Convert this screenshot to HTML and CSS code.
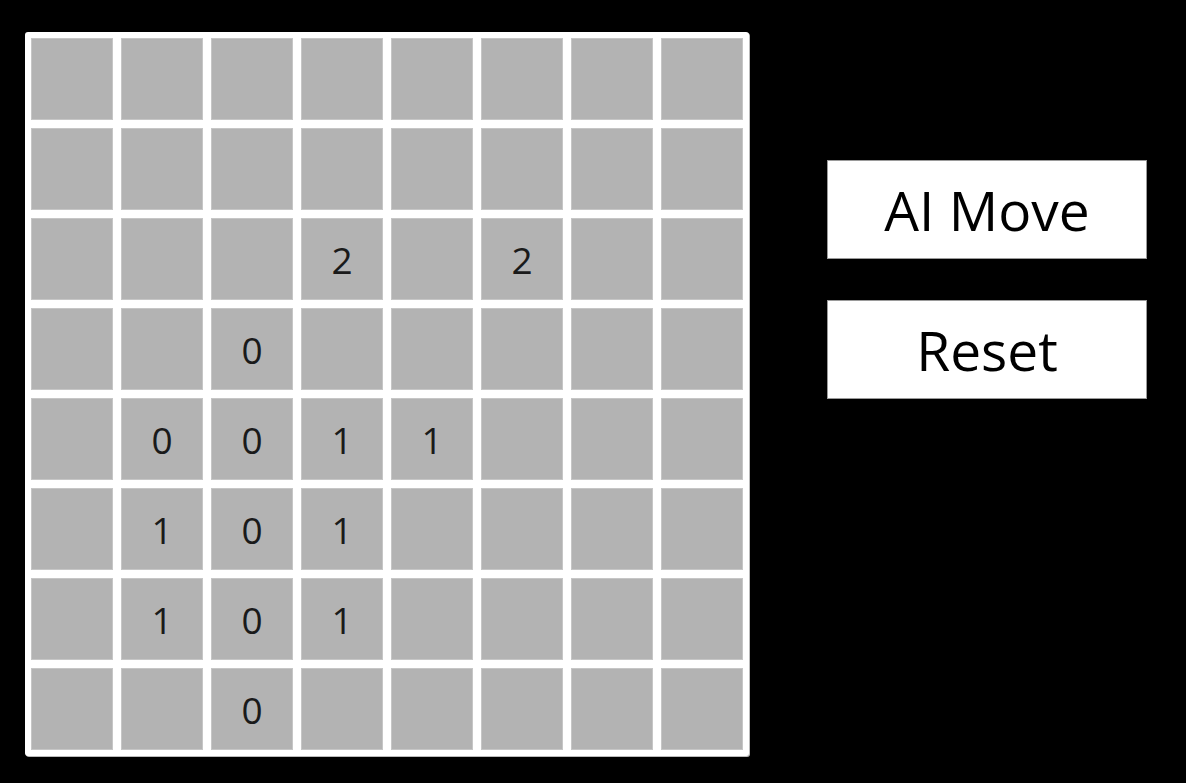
FILE: index.html
```html
<!DOCTYPE html>
<html>
<head>
<meta charset="utf-8">
<link rel="stylesheet" href="styles.css">
</head>
<body>
<div class="app">
  <div class="board">
    <div class="cell"></div><div class="cell"></div><div class="cell"></div><div class="cell"></div><div class="cell"></div><div class="cell"></div><div class="cell"></div><div class="cell"></div>
    <div class="cell"></div><div class="cell"></div><div class="cell"></div><div class="cell"></div><div class="cell"></div><div class="cell"></div><div class="cell"></div><div class="cell"></div>
    <div class="cell"></div><div class="cell"></div><div class="cell"></div><div class="cell">2</div><div class="cell"></div><div class="cell">2</div><div class="cell"></div><div class="cell"></div>
    <div class="cell"></div><div class="cell"></div><div class="cell">0</div><div class="cell"></div><div class="cell"></div><div class="cell"></div><div class="cell"></div><div class="cell"></div>
    <div class="cell"></div><div class="cell">0</div><div class="cell">0</div><div class="cell">1</div><div class="cell">1</div><div class="cell"></div><div class="cell"></div><div class="cell"></div>
    <div class="cell"></div><div class="cell">1</div><div class="cell">0</div><div class="cell">1</div><div class="cell"></div><div class="cell"></div><div class="cell"></div><div class="cell"></div>
    <div class="cell"></div><div class="cell">1</div><div class="cell">0</div><div class="cell">1</div><div class="cell"></div><div class="cell"></div><div class="cell"></div><div class="cell"></div>
    <div class="cell"></div><div class="cell"></div><div class="cell">0</div><div class="cell"></div><div class="cell"></div><div class="cell"></div><div class="cell"></div><div class="cell"></div>
  </div>
  <div class="controls">
    <button class="btn">AI Move</button>
    <button class="btn">Reset</button>
  </div>
</div>
</body>
</html>
```
FILE: styles.css
```css
html, body {
  margin: 0;
  padding: 0;
  background: #000;
  width: 1186px;
  height: 783px;
  overflow: hidden;
}
.app {
  display: flex;
  align-items: flex-start;
  padding: 32px 0 0 25px;
  font-family: "Open Sans", "Noto Sans", sans-serif;
}
.board {
  display: grid;
  grid-template-columns: repeat(8, 82px);
  grid-template-rows: repeat(8, 82px);
  gap: 8px;
  padding: 6px;
  background: #fff;
  border-radius: 3px;
  box-shadow: 1px 1px 0 #bbb;
}
.cell {
  box-sizing: border-box;
  background: #b3b3b3;
  border: 1px solid #c6c6c6;
  display: flex;
  align-items: center;
  justify-content: center;
  font-size: 37px;
  color: #1a1a1a;
  line-height: 1;
}
.controls {
  display: flex;
  flex-direction: column;
  gap: 41px;
  margin-left: 78px;
  margin-top: 128px;
}
.btn {
  box-sizing: border-box;
  width: 320px;
  height: 99px;
  background: #fff;
  border: 1px solid #9a9a9a;
  border-radius: 0;
  font-family: "Open Sans", "Noto Sans", sans-serif;
  font-size: 55px;
  color: #000;
  padding: 0;
  line-height: 1;
}
```
